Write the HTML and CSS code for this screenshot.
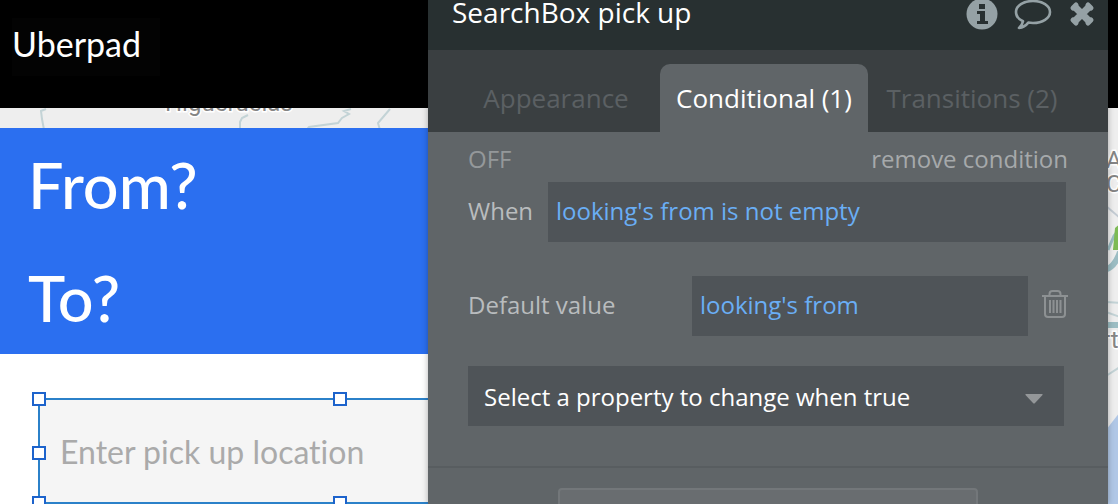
FILE: index.html
```html
<!DOCTYPE html>
<html lang="en">
<head>
<meta charset="utf-8">
<meta name="viewport" content="width=device-width, initial-scale=1">
<title>Uberpad</title>
<link rel="stylesheet" href="styles.css">
</head>
<body>
<div class="stage">
  <header class="app-header"><h1 class="brand">Uberpad</h1></header>
  <main class="canvas">
    <svg class="map" viewBox="0 108 1118 396" preserveAspectRatio="xMaxYMin slice" aria-hidden="true">
      <rect y="108" width="1118" height="396" fill="#eeeeee"/>
      <g fill="none" stroke="#c3d3d6" stroke-width="2">
        <path d="M46 109l-5 2 1 8 3 16M248 115l-6 3-2 4v10M351 109l-7 2 5 3-7 4-4 5-29 4-5 6M390 109l-12 14 2 7"/>
        <path d="M1106 206l14 12" stroke="#c3cbd3"/>
        <path d="M1106 302l14 1M1106 312l14 5M1106 376l14-9"/>
      </g>
      <path d="M1105 270q10-3 15-18M1105 325h15" fill="none" stroke="#9cbdc3" stroke-width="6"/>
      <path d="M1108 250l6-14 6-8" fill="none" stroke="#9cbdc3" stroke-width="3"/>
      <path d="M1113 250l2-22 5-4v26z" fill="#7dbb55"/>
      <path d="M1106 430l14-18v94h-14z" fill="#b0c7e6"/>
      <g class="map-label">
        <text x="165" y="111">Higueruelas</text>
        <text x="1106" y="168">A</text>
        <text x="1106" y="192">C</text>
        <text x="1102" y="348">rt</text>
      </g>
    </svg>
    <section class="route">
      <h2 class="route-line">From?</h2>
      <h2 class="route-line">To?</h2>
    </section>
    <section class="editor">
      <div class="selection">
        <input class="search" type="text" placeholder="Enter pick up location" aria-label="Enter pick up location">
        <i class="handle top left"></i><i class="handle top center"></i>
        <i class="handle middle left"></i>
        <i class="handle bottom left"></i><i class="handle bottom center"></i>
      </div>
    </section>
  </main>

  <aside class="panel">
    <header class="panel-header">
      <h2 class="panel-title">SearchBox pick up</h2>
      <div class="actions">
        <button class="icon-button" aria-label="Information">
          <svg width="32" height="32" viewBox="0 0 32 32"><circle cx="16" cy="16" r="15.5" fill="#95a1a5"/><path d="M13 6h6v5h-6zM11 13h8v10h3v3H11v-3h3v-7h-3z" fill="#283031"/></svg>
        </button>
        <button class="icon-button" aria-label="Comment">
          <svg width="38" height="34" viewBox="0 0 38 34"><path d="M19 4C9.500 4 2 8.800 2 15c0 4 2.700 7.300 7 9.300-.5 3-2 5-4 6.700 4-.5 7-2.500 9.300-5.400 1.500.3 3 .4 4.700.4 9.500 0 17-4.800 17-11S28.500 4 19 4z" fill="none" stroke="#95a1a5" stroke-width="2.600" stroke-linejoin="round"/></svg>
        </button>
        <button class="icon-button" aria-label="Close">
          <svg width="28" height="28" viewBox="0 0 28 28"><path d="M5.500 5.500l17 17M22.500 5.500l-17 17" stroke="#95a1a5" stroke-width="7"/><path d="M5 8l3-3M20 23l3-3M20 5l3 3M5 20l3 3" stroke="#95a1a5" stroke-width="5" stroke-linecap="round"/></svg>
        </button>
      </div>
    </header>
    <nav class="tabs">
      <button class="tab">Appearance</button>
      <button class="tab active">Conditional (1)</button>
      <button class="tab">Transitions (2)</button>
    </nav>
    <section class="condition">
      <div class="status"><span>OFF</span><button class="remove">remove condition</button></div>
      <div class="row when">
        <label for="when">When</label>
        <button class="expression" id="when">looking's from is not empty</button>
      </div>
      <div class="row default">
        <label for="default">Default value</label>
        <button class="expression" id="default">looking's from</button>
        <button class="icon-button" aria-label="Delete">
          <svg width="26" height="28" viewBox="0 0 26 28" fill="none" stroke="#8d9193" stroke-width="2"><path d="M0 6h26M7.500 6V4q0-3 3-3h5q3 0 3 3v2M3 6v18q0 3 3 3h14q3 0 3-3V6M8 10v13M11.500 10v13M15 10v13M18.500 10v13"/></svg>
        </button>
      </div>
      <div class="property">
        <select class="select" aria-label="Property"><option>Select a property to change when true</option></select>
        <svg class="arrow" width="18" height="10" viewBox="0 0 18 10"><path d="M1 0h16q1 0 .5 1L10 9q-1 1-2 0L.500 1Q0 0 1 0z" fill="#949799"/></svg>
      </div>
    </section>
    <footer class="panel-footer"><button class="define" aria-label="Define another condition"></button></footer>
  </aside>
</div>
</body>
</html>
```

FILE: styles.css
```css
* { box-sizing: border-box; }
body { margin: 0; background: #fff; font-family: "Open Sans", sans-serif; }
h1, h2 { margin: 0; font-weight: 400; }
button, input, select { font: inherit; color: inherit; border: 0; margin: 0; padding: 0; background: none; border-radius: 0; }

.stage { position: relative; display: flex; flex-direction: column; min-height: 100vh; overflow: hidden; }
.app-header { position: relative; z-index: 1; background: #000; padding: 18px 12px 32px; }
.brand { width: 148px; background: #030303; color: #fff; font: 34px/52px Lato, sans-serif; padding-bottom: 6px; }

.canvas { position: relative; flex: 1; padding-top: 20px; display: flex; flex-direction: column; }
.map { position: absolute; top: 0; left: 0; width: 100%; height: 100%; }
.map-label { font: 24px Roboto, sans-serif; fill: #858585; stroke: #fff; stroke-width: 3px; paint-order: stroke; }
.route { position: relative; width: 60%; background: #2b6ff0; color: #fff; padding: 0 28px; }
.route-line { font: 500 63px/113px Lato, sans-serif; }
.editor { position: relative; width: 60%; flex: 1; background: #fff; padding: 44px 0 0 38px; margin-bottom: -10px; }

.selection { position: relative; width: 604px; border: 2px solid #2b81c9; background: #f5f5f5; }
.search { display: block; width: 100%; height: 102px; padding: 2px 20px; font: 32px/40px Lato, sans-serif; font-variant-ligatures: none; }
.search::placeholder { color: #aaa; opacity: 1; }
.handle { position: absolute; width: 14px; height: 14px; margin: -7px; background: #fff; border: 2px solid #1d63cc; }
.top { top: -1px; }
.middle { top: 53px; }
.bottom { top: 103px; }
.left { left: -1px; }
.center { left: 50%; }

.panel { position: absolute; z-index: 2; top: 0; bottom: 0; left: 428px; right: 10px; display: flex; flex-direction: column; background: #606568; box-shadow: 0 0 6px rgba(0, 0, 0, .3); font-size: 24px; }
.panel-header { display: flex; justify-content: space-between; height: 50px; padding: 0 12px 0 24px; background: #283031; }
.panel-title { color: #fff; font-size: 28px; line-height: 24px; }
.actions { display: flex; align-items: center; gap: 16px; height: 28px; }
.icon-button { display: flex; flex: none; }
.tabs { display: grid; grid-template-columns: repeat(3, 1fr); padding: 14px 32px 0 24px; background: #3a3f41; font-size: 26px; color: #5b6063; }
.tab { height: 68px; white-space: nowrap; }
.active { background: #606568; color: #fff; border-radius: 10px 10px 0 0; }

.condition { display: flex; flex-direction: column; padding: 0 40px 40px; border-bottom: 2px solid #585d60; color: #b9bcbe; }
.status { display: flex; justify-content: space-between; align-items: center; height: 50px; padding-top: 2px; color: #94989a; }
.remove { color: #a6a9ab; }
.row { display: grid; align-items: center; height: 60px; }
.row label { padding-bottom: 4px; }
.when { grid-template-columns: 80px 1fr; padding-right: 2px; margin-bottom: 34px; }
.default { grid-template-columns: 224px 1fr 40px; margin-bottom: 30px; }
.default .icon-button { justify-content: flex-end; padding-bottom: 4px; }
.expression { height: 60px; padding: 0 8px 4px; background: #4f5458; color: #6aaef5; text-align: left; }
.property { position: relative; margin-right: 4px; }
.select { appearance: none; display: block; width: 100%; height: 60px; padding: 0 16px; background: #4f5458; color: #fff; }
.arrow { position: absolute; right: 21px; top: 28px; pointer-events: none; }
.panel-footer { flex: 1; display: flex; padding: 20px 130px 0; overflow: hidden; }
.define { flex: 1; height: 60px; background: #696d70; border: 2px solid #73777a; border-radius: 4px; }
```
